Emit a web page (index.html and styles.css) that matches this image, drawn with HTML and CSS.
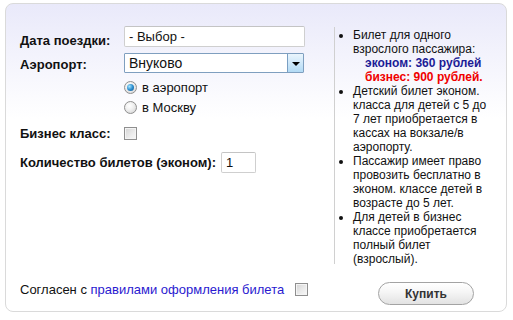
FILE: index.html
```html
<!DOCTYPE html>
<html lang="ru">
<head>
<meta charset="utf-8">
<title>Покупка билета</title>
<link rel="stylesheet" href="styles.css">
</head>
<body>
<div class="panel">
  <div class="top">
    <div class="form">
      <div class="row row-date">
        <span class="label">Дата поездки:</span>
        <div class="text-input wide">- Выбор -</div>
      </div>
      <div class="row row-airport">
        <span class="label">Аэропорт:</span>
        <div class="select">
          <span class="select-value">Внуково</span>
          <span class="select-btn"><span class="arrow"></span></span>
        </div>
      </div>
      <div class="row row-radio first">
        <span class="radio checked"></span>
        <span class="opt">в аэропорт</span>
      </div>
      <div class="row row-radio">
        <span class="radio"></span>
        <span class="opt">в Москву</span>
      </div>
      <div class="row row-business">
        <span class="label">Бизнес класс:</span>
        <span class="checkbox"></span>
      </div>
      <div class="row row-count">
        <span class="label label-auto">Количество билетов (эконом):</span>
        <div class="text-input small">1</div>
      </div>
    </div>
    <div class="info">
      <ul>
        <li>Билет для одного взрослого пассажира:
          <span class="price eco">эконом: 360 рублей</span>
          <span class="price biz">бизнес: 900 рублей.</span>
        </li>
        <li>Детский билет эконом. класса для детей с 5 до 7 лет приобретается в кассах на вокзале/в аэропорту.</li>
        <li>Пассажир имеет право провозить бесплатно в эконом. классе детей в возрасте до 5 лет.</li>
        <li>Для детей в бизнес классе приобретается полный билет (взрослый).</li>
      </ul>
    </div>
  </div>
  <div class="bottom">
    <span class="agree">Согласен с <a href="#" class="rules">правилами оформления билета</a></span>
    <span class="checkbox agree-box"></span>
    <button class="buy" type="button">Купить</button>
  </div>
</div>
</body>
</html>
```

FILE: styles.css
```css
html, body {
  margin: 0;
  padding: 0;
  background: #fff;
}

body {
  font-family: "Liberation Sans", Arial, sans-serif;
  color: #111;
}

.panel {
  margin: 3px 0 0 5px;
  width: 500px;
  height: 307px;
  border: 1px solid #dadada;
  border-radius: 8px;
  background: linear-gradient(to bottom, #e9e9fa 0, #f3f3fc 50px, #ffffff 115px);
  display: flex;
  flex-direction: column;
}

.top {
  display: flex;
  height: 276px;
}

.form {
  width: 314px;
  padding-left: 14px;
  padding-top: 22px;
  display: flex;
  flex-direction: column;
}

.row {
  display: flex;
  align-items: flex-start;
}

.label {
  width: 104px;
  flex: none;
  font-size: 13px;
  line-height: 15px;
  font-weight: bold;
}

.label-auto {
  width: auto;
  margin-right: 5px;
}

.row-date { height: 21px; }
.row-date .label { margin-top: 7px; }

.row-airport { height: 20px; margin-top: 6px; }
.row-airport .label { margin-top: 4px; }

.row-radio { height: 20px; padding-left: 104px; }
.row-radio.first { margin-top: 7px; }

.row-business { height: 15px; margin-top: 6px; }
.row-business .checkbox { margin-top: 1px; }

.row-count { height: 21px; margin-top: 11px; }
.row-count .label { margin-top: 3px; }

.text-input {
  box-sizing: border-box;
  height: 21px;
  border: 1px solid #cfcfcf;
  border-top-color: #c4c4c4;
  border-radius: 2px;
  background: #fff;
  font-size: 13px;
  line-height: 19px;
  padding: 0 4px;
  color: #111;
}

.text-input.wide { width: 181px; }
.text-input.small { width: 35px; }

.select {
  box-sizing: border-box;
  width: 180px;
  height: 20px;
  border: 1px solid #7f9fbf;
  border-radius: 1px;
  background: #fff;
  display: flex;
}

.select-value {
  flex: 1;
  font-size: 14px;
  line-height: 18px;
  padding-left: 4px;
  color: #111;
}

.select-btn {
  width: 15px;
  height: 18px;
  border-left: 1px solid #7a9fc3;
  background: linear-gradient(to bottom, #eaf5fd 0, #cfe8f9 50%, #b2daf5 100%);
  display: flex;
  align-items: center;
  justify-content: center;
}

.arrow {
  width: 0;
  height: 0;
  border-left: 4px solid transparent;
  border-right: 4px solid transparent;
  border-top: 4px solid #000;
  margin-top: 1px;
}

.radio {
  box-sizing: border-box;
  width: 13px;
  height: 13px;
  margin-top: 1px;
  border-radius: 50%;
  border: 1px solid #8f8f8f;
  background: radial-gradient(circle at 40% 35%, #ffffff 0, #f0f0f0 40%, #cfcfcf 100%);
  display: flex;
  align-items: center;
  justify-content: center;
  flex: none;
}

.radio.checked::after {
  content: "";
  width: 7px;
  height: 7px;
  border-radius: 50%;
  background: radial-gradient(circle at 35% 35%, #a6e6ff 0, #2e8fd0 50%, #0d4f86 100%);
}

.opt {
  margin-left: 5px;
  font-size: 13px;
  line-height: 15px;
  color: #111;
}

.checkbox {
  box-sizing: border-box;
  display: inline-block;
  width: 13px;
  height: 13px;
  border: 1px solid #8f8f8f;
  background: linear-gradient(135deg, #d4d4d4 0, #ececec 60%, #f8f8f8 100%);
  box-shadow: inset 0 0 0 1px #f4f4f4;
  flex: none;
}

.info {
  margin-top: 23px;
  height: 236px;
  width: 136px;
  border-left: 1px solid #d0d0d0;
  padding-left: 18px;
  padding-top: 1px;
}

.info ul {
  margin: 0;
  padding: 0;
  font-size: 12px;
  line-height: 14px;
  color: #111;
}

.info li {
  margin: 0;
}

.price {
  display: block;
  padding-left: 12px;
  font-weight: bold;
}

.price.eco { color: #1c1c96; }
.price.biz { color: #f00000; }

.bottom {
  flex: 1;
  display: flex;
  align-items: flex-start;
  padding-left: 14px;
}

.agree {
  font-size: 13px;
  line-height: 16px;
  margin-top: 2px;
  color: #111;
}

.rules {
  color: #2a1ad0;
  text-decoration: none;
}

.agree-box {
  margin-left: 11px;
  margin-top: 3px;
}

.buy {
  margin: 2px 32px 0 auto;
  box-sizing: border-box;
  width: 96px;
  height: 23px;
  border: 1px solid #a3a3a3;
  border-radius: 12px;
  background: linear-gradient(to bottom, #ffffff 0, #f5f5f5 45%, #e2e2e2 100%);
  font-family: "Liberation Sans", Arial, sans-serif;
  font-size: 12px;
  font-weight: bold;
  color: #333;
  padding: 0;
  cursor: pointer;
}
```
